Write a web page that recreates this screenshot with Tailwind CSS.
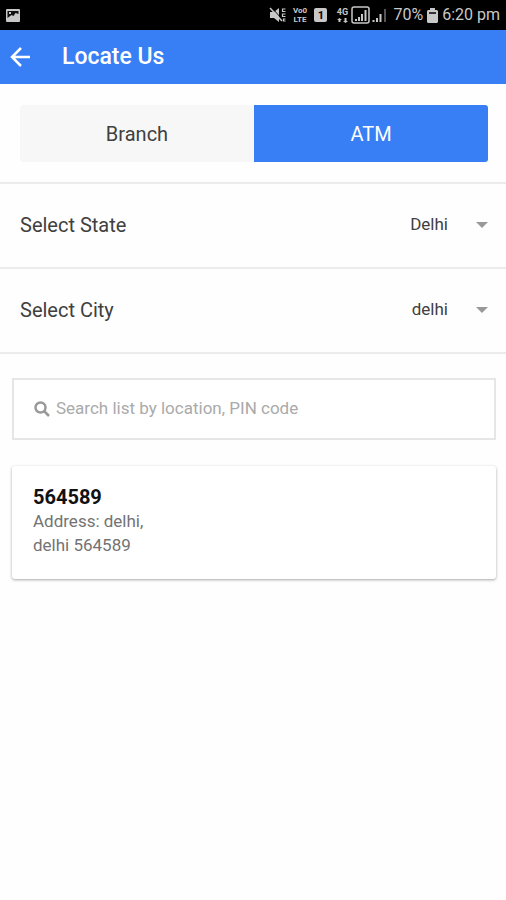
<!DOCTYPE html>
<html lang="en">
<head>
<meta charset="utf-8">
<meta name="viewport" content="width=device-width, initial-scale=1">
<title>Locate Us</title>
<script src="https://cdn.jsdelivr.net/npm/@tailwindcss/browser@4"></script>
</head>
<body class="min-h-screen bg-[#fefefe] font-[Roboto,sans-serif] text-[#404040]">
<div class="flex h-[30px] items-center justify-between bg-black pr-1.5 pl-[5px] text-[#c8c8c8]">
  <svg class="h-[15px] w-4" viewBox="0 0 16 15" fill="none" aria-label="Picture saved"><rect x="1" y="1" width="14" height="13" rx="1" fill="#c8c8c8"/><path d="M2.500 3h11v3l-3-1-2 3-2-1-4 3z" fill="#111"/><rect x="4" y="4" width="2" height="2" fill="#c8c8c8"/></svg>
  <div class="flex items-center">
    <svg class="mr-1 h-4 w-[18px]" viewBox="0 0 18 16" fill="none" aria-label="Muted"><path d="M1 5h4l5-4v14l-5-4H1z" fill="#c8c8c8"/><path d="M2 0l12 13" stroke="#000" stroke-width="1"/><path d="M1 1l12 13" stroke="#c8c8c8" stroke-width="1.500"/><path d="M16.500 2h-3v2.500h3M16.500 7h-3v2.500h3M16.500 12h-2v2h2" stroke="#c8c8c8" stroke-width="1.200"/></svg>
    <div class="mr-1.5 w-[17px] text-center text-[8px] leading-[9px] font-bold"><div>Vo0</div><div>LTE</div></div>
    <div class="mr-2 flex h-[14px] w-[13px] items-center justify-center rounded-[2px] bg-[#c8c8c8] text-[11px] leading-none font-bold text-black">1</div>
    <div class="mr-0.5 flex w-[14px] flex-col items-center text-[9px] leading-[8px] font-bold">4G<svg class="mt-0.5 h-[5px] w-[11px]" viewBox="0 0 11 5" fill="#c8c8c8" aria-hidden="true"><path d="M0 2l2.500-2L5 2H3.500v2h-2V2zM6 3l2.500 2L11 3H9.500V0h-2v3z"/></svg></div>
    <svg class="mr-0.5 h-[18px] w-[19px]" viewBox="0 0 19 18" fill="none" aria-label="Signal, SIM 1"><rect x="1" y="1" width="17" height="16" rx="2" stroke="#c8c8c8" stroke-width="1.500"/><path d="M5 15v-2M8 15v-4M11 15V8M14.500 15V4" stroke="#c8c8c8" stroke-width="2"/></svg>
    <svg class="mr-1.5 h-[16px] w-[15px]" viewBox="0 0 15 16" fill="none" aria-label="Signal, SIM 2"><path d="M1.500 15v-2M5 15v-4M8.500 15V7" stroke="#c8c8c8" stroke-width="2"/><path d="M13 15V2" stroke="#555" stroke-width="2"/></svg>
    <span class="mr-1 text-base">70%</span>
    <svg class="mr-1 h-[15px] w-[11px]" viewBox="0 0 11 15" aria-label="Battery"><path d="M3 0h5v2h2l1 1v11l-1 1H1l-1-1V3l1-1h2z" fill="#c8c8c8"/><path d="M2 4h7v2H2z" fill="#333"/></svg>
    <span class="text-base">6:20 pm</span>
  </div>
</div>
<header class="flex h-[54px] items-center bg-[#387ef5] pl-2.5 text-white">
  <button type="button" aria-label="Back" class="mr-8"><svg class="block size-5" viewBox="0 0 20 20" fill="none" stroke="currentColor" stroke-width="2.500"><path d="M20 10H2M11 1L2 10l9 9"/></svg></button>
  <h1 class="text-[23px] font-medium">Locate Us</h1>
</header>
<main>
  <div class="border-b-2 border-[#ececec] pt-[21px] pr-[18px] pb-5 pl-5">
    <div class="flex h-[57px] overflow-hidden rounded-[3px] text-xl">
      <button type="button" class="flex-1 bg-[#f7f7f7]">Branch</button>
      <button type="button" aria-pressed="true" class="flex-1 bg-[#387ef5] text-white">ATM</button>
    </div>
  </div>
  <div class="flex h-[85px] items-center justify-between border-b-2 border-[#ececec] pr-[18px] pb-0.5 pl-5">
    <label for="state" class="text-xl">Select State</label>
    <div class="flex items-center">
      <select id="state" class="w-40 appearance-none bg-transparent text-right text-[17px] outline-none"><option>Delhi</option></select>
      <svg class="ml-7 h-1.5 w-3" viewBox="0 0 12 6" fill="#999" aria-hidden="true"><path d="M0 0h12L6 6z"/></svg>
    </div>
  </div>
  <div class="flex h-[85px] items-center justify-between border-b-2 border-[#ececec] pr-[18px] pb-0.5 pl-5">
    <label for="city" class="text-xl">Select City</label>
    <div class="flex items-center">
      <select id="city" class="w-40 appearance-none bg-transparent text-right text-[17px] outline-none"><option>delhi</option></select>
      <svg class="ml-7 h-1.5 w-3" viewBox="0 0 12 6" fill="#999" aria-hidden="true"><path d="M0 0h12L6 6z"/></svg>
    </div>
  </div>
  <div class="pt-6 pr-2.5 pl-3">
    <label class="flex h-[62px] items-center border-2 border-[#e6e6e6] bg-white pl-5">
      <svg class="mr-1.5 size-4 shrink-0" viewBox="0 0 16 16" fill="none" stroke="#999" stroke-width="2.500" aria-hidden="true"><circle cx="6.500" cy="6.500" r="5"/><path d="M10 10l5 5"/></svg>
      <input type="search" aria-label="Search list" placeholder="Search list by location, PIN code" class="min-w-0 flex-1 bg-transparent text-[17px] outline-none placeholder:text-[#aaa]">
    </label>
    <article class="mt-[26px] rounded-[3px] bg-white px-[21px] pt-[19px] pb-[22px] shadow-[0_1px_3px_rgba(0,0,0,0.35)]">
      <h2 class="text-xl leading-6 font-bold text-[#111]">564589</h2>
      <p class="text-[17px] leading-6 text-[#737373]">Address: delhi,<br>delhi 564589</p>
    </article>
  </div>
</main>
</body>
</html>
